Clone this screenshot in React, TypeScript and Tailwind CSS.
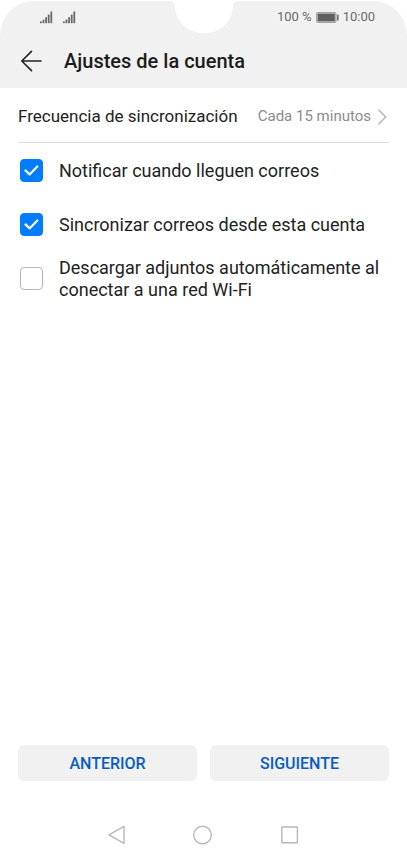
import { useState } from "react";

const OPTIONS = [
    { id: "notify", label: "Notificar cuando lleguen correos", checked: true },
    { id: "sync", label: "Sincronizar correos desde esta cuenta", checked: true },
    { id: "download", label: "Descargar adjuntos automáticamente al conectar a una red Wi-Fi", checked: false },
];

function SignalIcon() {
    return (
        <svg width="13" height="13" viewBox="0 0 13 13" fill="#6a6a6a" aria-hidden="true">
            <rect x="0" y="10.4" width="1.8" height="1.8" />
            <rect x="2.6" y="8.6" width="1.8" height="3.6" />
            <rect x="5.2" y="6.2" width="1.8" height="6" />
            <rect x="7.8" y="3.6" width="1.8" height="8.6" />
            <rect x="10.4" y="0.5" width="1.8" height="11.7" />
        </svg>
    );
}

function BatteryIcon() {
    return (
        <svg width="23" height="11" viewBox="0 0 23 11" aria-hidden="true">
            <rect x="0.6" y="0.6" width="19.4" height="9.8" rx="1.6" fill="#c4c4c4" stroke="#a4a4a4" strokeWidth="1.2" />
            <rect x="1.8" y="1.8" width="17" height="7.4" rx="0.4" fill="#5f5f5f" />
            <rect x="21" y="2.4" width="1.6" height="6.2" rx="0.5" fill="#6a6a6a" />
        </svg>
    );
}

function Notch() {
    return (
        <svg
            className="absolute -top-px left-1/2 -translate-x-1/2"
            width="70"
            height="34"
            viewBox="0 0 70 34"
            fill="#fff"
            aria-hidden="true"
        >
            <path d="M0 0H70V1C67 1 64.6 2.4 64.2 5.5C63.8 21.5 51 33.2 35 33.2S6.2 21.5 5.8 5.5C5.4 2.4 3 1 0 1Z" />
        </svg>
    );
}

function Header() {
    return (
        <header className="relative mt-px rounded-t-[34px] bg-[#f1f1f1]">
            <Notch />
            <div className="flex h-8 items-center justify-between pl-10 pr-8 text-[13px] text-[#6a6a6a]">
                <div className="flex gap-[10px]">
                    <SignalIcon />
                    <SignalIcon />
                </div>
                <div className="flex items-center gap-1">
                    <span>100 %</span>
                    <BatteryIcon />
                    <span>10:00</span>
                </div>
            </div>
            <div className="flex h-[55px] items-center gap-[21px] px-5">
                <button type="button" aria-label="Atrás">
                    <svg width="23" height="22" viewBox="0 0 23 22" fill="none" stroke="#222" strokeWidth="1.6" strokeLinecap="round" strokeLinejoin="round">
                        <path d="M21 11H2M11.5 1.4L1.8 11L11.5 20.6" />
                    </svg>
                </button>
                <h1 className="text-xl font-medium text-[#1c1c1c]">Ajustes de la cuenta</h1>
            </div>
        </header>
    );
}

export default function App() {
    const [options, setOptions] = useState(OPTIONS);

    function toggle(id: string): void {
        setOptions(options.map((o) => (o.id === id ? { ...o, checked: !o.checked } : o)));
    }

    return (
        <div className="flex min-h-screen flex-col bg-white font-[Roboto,sans-serif]">
            <Header />

            <main className="flex-1 px-[18px]">
                <button type="button" className="flex h-[55px] w-full items-center justify-between border-b border-[#dedede] pt-[3px] text-left">
                    <span className="text-[17px] text-[#222]">Frecuencia de sincronización</span>
                    <span className="flex items-center gap-[6px] text-[15px] text-[#8c8c8c]">
                        Cada 15 minutos
                        <svg width="12" height="16" viewBox="0 0 12 16" fill="none" stroke="#b4b4b4" strokeWidth="1.4" aria-hidden="true">
                            <path d="M1.5 0.8L8.7 8L1.5 15.2" />
                        </svg>
                    </span>
                </button>

                {options.map((option) => (
                    <label key={option.id} className="flex h-[54px] items-center gap-4 pl-[2px]">
                        <span className="grid shrink-0 place-items-center">
                            <input
                                type="checkbox"
                                checked={option.checked}
                                onChange={() => toggle(option.id)}
                                className="peer col-start-1 row-start-1 size-[23px] appearance-none rounded-[4px] border border-[#b5b5b5] bg-white checked:border-[#007dff] checked:bg-[#007dff]"
                            />
                            <svg
                                className="pointer-events-none invisible col-start-1 row-start-1 peer-checked:visible"
                                width="15"
                                height="11"
                                viewBox="0 0 15 11"
                                fill="none"
                                stroke="#fff"
                                strokeWidth="2.2"
                                strokeLinecap="round"
                                strokeLinejoin="round"
                                aria-hidden="true"
                            >
                                <path d="M1.5 5.4L5.6 9.4L13.3 1.5" />
                            </svg>
                        </span>
                        <span className="pt-[2px] text-lg leading-[22px] text-[#222]">{option.label}</span>
                    </label>
                ))}
            </main>

            <footer>
                <div className="grid grid-cols-2 gap-[13px] px-[18px] text-base font-medium text-[#0a5cc2]">
                    <button type="button" className="h-9 rounded-md bg-[#f1f1f1] pt-[2px]">ANTERIOR</button>
                    <button type="button" className="h-9 rounded-md bg-[#f1f1f1] pt-[2px]">SIGUIENTE</button>
                </div>
                <nav className="mt-7 grid h-[51px] grid-cols-3 place-items-center px-[74px]">
                    <button type="button" aria-label="Volver">
                        <svg width="18" height="20" viewBox="0 0 18 20" fill="none" stroke="#b8b8b8" strokeWidth="1.4" strokeLinejoin="round">
                            <path d="M16 1.4V18.4L1 9.9Z" />
                        </svg>
                    </button>
                    <button type="button" aria-label="Inicio">
                        <svg width="20" height="20" viewBox="0 0 20 20" fill="none" stroke="#b8b8b8" strokeWidth="1.4">
                            <circle cx="9.5" cy="10" r="8.8" />
                        </svg>
                    </button>
                    <button type="button" aria-label="Recientes">
                        <svg width="18" height="18" viewBox="0 0 18 18" fill="none" stroke="#b8b8b8" strokeWidth="1.4">
                            <rect x="0.8" y="1" width="15.6" height="15.8" rx="0.5" />
                        </svg>
                    </button>
                </nav>
            </footer>
        </div>
    );
}
